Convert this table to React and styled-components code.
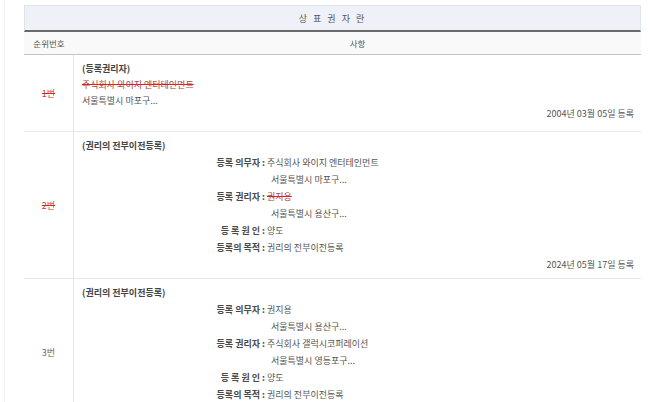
import React from "react";
import styled, { createGlobalStyle } from "styled-components";

const Global = createGlobalStyle`
  html, body { margin: 0; padding: 0; background: #fff; }
  body {
    font-family: "Noto Sans CJK KR", "Noto Sans", sans-serif;
    font-size: 9px;
    color: #555;
  }
`;

const Page = styled.div`
  padding: 5px 9px 0 19px;
  border-left: 1px solid #f0f0f0;
  margin-left: 4px;
  height: 402px;
  overflow: hidden;
  box-sizing: border-box;
`;

const Table = styled.div`
  width: 617px;
`;

const TitleBar = styled.div`
  height: 24px;
  display: flex;
  align-items: center;
  justify-content: center;
  background: #eef1f7;
  border: 1px solid #dfe3ea;
  border-bottom: 2px solid #6a6a6a;
  letter-spacing: 2px;
  color: #555;
`;

const HeaderRow = styled.div`
  display: grid;
  grid-template-columns: 50px 1fr;
  height: 22px;
  align-items: center;
  background: #f9f9f9;
  border-bottom: 1px solid #c4c4c4;
  font-size: 8.5px;
`;

const HeaderCell = styled.div`
  text-align: center;
`;

const Row = styled.div`
  display: grid;
  grid-template-columns: 50px 1fr;
  border-bottom: 1px solid #e8e8e8;
`;

const RankCell = styled.div`
  display: flex;
  align-items: center;
  justify-content: center;
  border-right: 1px solid #e6e6e6;
  color: ${(p) => (p.$struck ? "#b44" : "#666")};
  text-decoration: ${(p) => (p.$struck ? "line-through" : "none")};
  text-decoration-color: #d22;
`;

const Content = styled.div`
  padding: ${(p) => p.$pad};
  line-height: ${(p) => p.$lh}px;
`;

const Heading = styled.div`
  font-weight: 700;
  color: #444;
`;

const Line = styled.div`
  padding-left: ${(p) => p.$indent || 0}px;
`;

const Struck = styled.span`
  text-decoration: line-through;
  text-decoration-color: #d22;
  text-decoration-thickness: 1px;
  color: #a44;
`;

const DateLine = styled.div`
  text-align: right;
  margin-top: ${(p) => p.$mt || 0}px;
`;

const Details = styled.div`
  display: grid;
  grid-template-columns: 183px 1fr;
`;

const Label = styled.div`
  text-align: right;
  white-space: pre;
  font-weight: 700;
  color: #4a4a4a;
`;

const Value = styled.div`
  padding-left: ${(p) => 2 + (p.$indent || 0)}px;
`;

function DetailList({ items }) {
  return (
    <Details>
      {items.map((it, i) => (
        <React.Fragment key={i}>
          <Label>{it.label ? it.label + " :" : ""}</Label>
          <Value $indent={it.label ? 0 : 4}>{it.value}</Value>
        </React.Fragment>
      ))}
    </Details>
  );
}

const row2 = [
  { label: "등록 의무자", value: "주식회사 와이지 엔터테인먼트" },
  { label: "", value: "서울특별시 마포구..." },
  { label: "등록 권리자", value: <Struck>권지용</Struck> },
  { label: "", value: "서울특별시 용산구..." },
  { label: "등 록 원 인", value: "양도" },
  { label: "등록의 목적", value: "권리의 전부이전등록" },
];

const row3 = [
  { label: "등록 의무자", value: "권지용" },
  { label: "", value: "서울특별시 용산구..." },
  { label: "등록 권리자", value: "주식회사 갤럭시코퍼레이션" },
  { label: "", value: "서울특별시 영등포구..." },
  { label: "등 록 원 인", value: "양도" },
  { label: "등록의 목적", value: "권리의 전부이전등록" },
];

export default function App() {
  return (
    <>
      <Global />
      <Page>
        <Table>
          <TitleBar>상 표 권 자 란</TitleBar>
          <HeaderRow>
            <HeaderCell>순위번호</HeaderCell>
            <HeaderCell>사항</HeaderCell>
          </HeaderRow>
          <Row>
            <RankCell $struck>1번</RankCell>
            <Content $pad="6px 7px 9px 8px" $lh={16}>
              <Heading>(등록권리자)</Heading>
              <Line>
                <Struck>주식회사 와이지 엔터테인먼트</Struck>
              </Line>
              <Line>서울특별시 마포구...</Line>
              <DateLine $mt={-3}>2004년 03월 05일 등록</DateLine>
            </Content>
          </Row>
          <Row>
            <RankCell $struck>2번</RankCell>
            <Content $pad="5px 7px 5px 8px" $lh={17}>
              <Heading>(권리의 전부이전등록)</Heading>
              <DetailList items={row2} />
              <DateLine>2024년 05월 17일 등록</DateLine>
            </Content>
          </Row>
          <Row>
            <RankCell>3번</RankCell>
            <Content $pad="5px 7px 22px 8px" $lh={17}>
              <Heading>(권리의 전부이전등록)</Heading>
              <DetailList items={row3} />
            </Content>
          </Row>
        </Table>
      </Page>
    </>
  );
}
